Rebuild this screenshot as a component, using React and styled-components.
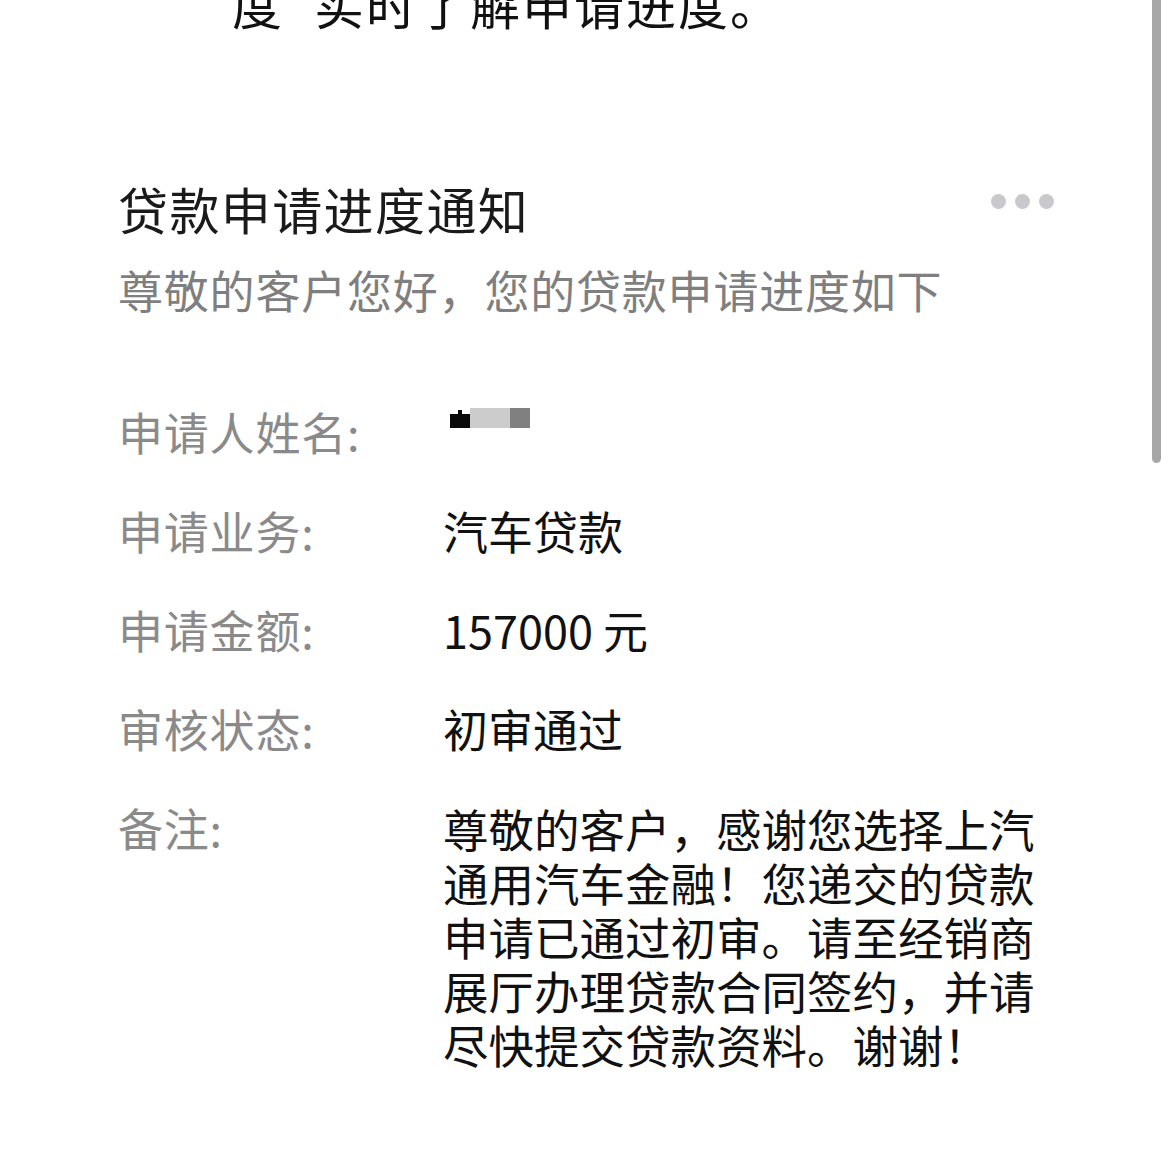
import React from "react";
import styled, { createGlobalStyle } from "styled-components";

const GlobalStyle = createGlobalStyle`
  html, body {
    margin: 0;
    padding: 0;
    background: #ffffff;
  }
  body {
    font-family: "Noto Sans CJK SC", "Noto Sans", sans-serif;
  }
`;

const rows = [
  { label: "申请人姓名:", masked: true },
  { label: "申请业务:", value: "汽车贷款" },
  { label: "申请金额:", value: "157000 元" },
  { label: "审核状态:", value: "初审通过" },
  {
    label: "备注:",
    value:
      "尊敬的客户，感谢您选择上汽通用汽车金融！您递交的贷款申请已通过初审。请至经销商展厅办理贷款合同签约，并请尽快提交贷款资料。谢谢！",
    long: true,
  },
];

const App = () => {
  return (
    <>
      <GlobalStyle />
      <Page>
        <PrevCard>
          <PrevText>
            度<Quote>”</Quote>实时了解申请进度。
          </PrevText>
        </PrevCard>
        <Card>
          <Header>
            <Title>贷款申请进度通知</Title>
            <MoreDots>
              <span />
              <span />
              <span />
            </MoreDots>
          </Header>
          <Subtitle>尊敬的客户您好，您的贷款申请进度如下</Subtitle>
          <InfoList>
            {rows.map((row) => (
              <InfoRow key={row.label}>
                <Label>{row.label}</Label>
                {row.masked ? (
                  <Value>
                    <Mosaic width="80" height="22" viewBox="0 0 80 22">
                      <rect x="0" y="8" width="20" height="14" fill="#0a0a0a" />
                      <rect x="8" y="4" width="4" height="5" fill="#0a0a0a" />
                      <rect x="20" y="2" width="40" height="20" fill="#cccccc" />
                      <rect x="60" y="2" width="20" height="20" fill="#808080" />
                    </Mosaic>
                  </Value>
                ) : (
                  <Value $long={row.long}>{row.value}</Value>
                )}
              </InfoRow>
            ))}
          </InfoList>
        </Card>
        <ScrollThumb />
      </Page>
    </>
  );
};

const Page = styled.div`
  position: relative;
  width: 1170px;
  height: 1170px;
  overflow: hidden;
  background: #ffffff;
`;

const PrevCard = styled.div`
  height: 120px;
  padding-left: 232px;
  overflow: hidden;
`;

const PrevText = styled.div`
  margin-top: -27px;
  font-size: 50px;
  letter-spacing: 2px;
  line-height: 60px;
  color: #111111;
  white-space: nowrap;
`;

const Quote = styled.span`
  letter-spacing: -20px;
`;

const Card = styled.div`
  padding: 58px 116px 0 118px;
`;

const Header = styled.div`
  display: flex;
  justify-content: space-between;
  align-items: flex-start;
`;

const Title = styled.h1`
  margin: 0;
  font-size: 50px;
  font-weight: 400;
  letter-spacing: 1.4px;
  line-height: 60px;
  color: #1a1a1a;
`;

const MoreDots = styled.div`
  display: flex;
  gap: 9px;
  margin-top: 16px;

  span {
    width: 15px;
    height: 15px;
    border-radius: 50%;
    background: #c9c9cd;
  }
`;

const Subtitle = styled.p`
  margin: 25px 0 0;
  font-size: 45px;
  letter-spacing: 0.8px;
  line-height: 54px;
  color: #7f7f7f;
`;

const InfoList = styled.div`
  display: flex;
  flex-direction: column;
  gap: 45px;
  margin-top: 88px;
`;

const InfoRow = styled.div`
  display: flex;
  align-items: flex-start;
`;

const Label = styled.div`
  width: 327px;
  flex-shrink: 0;
  font-size: 45px;
  letter-spacing: 0.8px;
  line-height: 54px;
  color: #8a8a8a;
`;

const Value = styled.div`
  margin-left: -2px;
  font-size: ${(p) => (p.$long ? "45.5px" : "45px")};
  line-height: 54px;
  color: #111111;
  width: ${(p) => (p.$long ? "600px" : "auto")};
  height: ${(p) => (p.$long ? "auto" : "54px")};
`;

const Mosaic = styled.svg`
  display: block;
  margin: 1px 0 0 7px;
`;

const ScrollThumb = styled.div`
  position: absolute;
  top: 0;
  left: 1152px;
  width: 9px;
  height: 463px;
  border-radius: 0 0 5px 5px;
  background: #a7a7a7;
`;

export default App;
